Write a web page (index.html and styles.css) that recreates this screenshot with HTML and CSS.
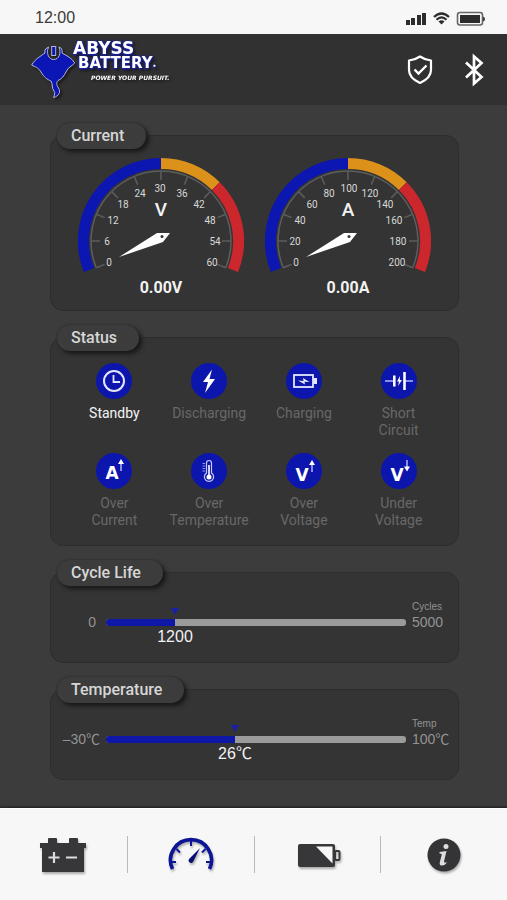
FILE: index.html
```html
<!DOCTYPE html>
<html lang="en">
<head>
<meta charset="utf-8">
<meta name="viewport" content="width=device-width, initial-scale=1">
<title>Abyss Battery</title>
<link rel="stylesheet" href="styles.css">
</head>
<body>
<div class="statusbar">
  <span class="clock">12:00</span>
  <svg class="system" width="80" height="16" viewBox="0 0 80 16" aria-hidden="true">
    <g fill="#2c2c2c">
      <rect x="0" y="10" width="4" height="5"/><rect x="5" y="8" width="4" height="7"/><rect x="11" y="5" width="4" height="10"/><rect x="16" y="3" width="4" height="12"/>
      <path d="M32.500 11.500 L35.500 14.500 L38.500 11.500 Q35.500 9 32.500 11.500Z"/>
      <rect x="54" y="5" width="20" height="8"/>
      <path d="M77 6.500 Q79 7 79 9 T77 11.500Z"/>
    </g>
    <path d="M28 7 Q35.500 0 43 7M30.500 9.800 Q35.500 5 40.500 9.800" fill="none" stroke="#2c2c2c" stroke-width="2.200"/>
    <rect x="51.500" y="2.500" width="25" height="12.500" rx="2.500" fill="none" stroke="#666" stroke-width="1.600"/>
  </svg>
</div>

<header class="header">
  <a class="brand" href="#">
    <svg class="manta" width="46" height="58" viewBox="0 0 46 58" aria-hidden="true">
      <path d="M18.500 6L15.500 8Q14.500 10 15 12C11 15 5 18 1.700 24C5 26 8 26 11 31C14 36 17 38.500 21 40C23 43 21.500 47 24 50C25.500 52 24.500 54 23.500 56.500C29 55 31 51 28.500 47C26 43.500 26.500 41 28 39.500C32 38 34 35 36.500 30C38.500 26 41 26 44.700 22C42 17 37 15 32 12Q32.500 9 31.500 7.500L29 6C31.500 12 29 18.500 23.700 18.500C18.500 18.500 16 12 18.500 6Z" fill="#0b16b4" stroke="#b4b6d8" stroke-width="1"/>
      <rect x="21.700" y="5.500" width="4" height="9" fill="#0b16b4" stroke="#b4b6d8"/>
    </svg>
    <span class="wordmark">
      <span class="word-top">ABYSS</span>
      <span class="word-bottom">BATTERY<span class="dot">•</span></span>
      <span class="tagline">POWER YOUR PURSUIT.</span>
    </span>
  </a>
  <div class="actions">
    <button class="icon-button" type="button" aria-label="Protection">
      <svg width="28" height="32" viewBox="0 0 28 32"><path d="M14 2.500Q19 6 25 6.500V16Q25 24 14 29Q3 24 3 16V6.500Q9 6 14 2.500Z" fill="none" stroke="#fff" stroke-width="2.200" stroke-linejoin="round"/><path d="M8.500 15.500L12.500 19.500L20.500 11.500" fill="none" stroke="#fff" stroke-width="2.400"/></svg>
    </button>
    <button class="icon-button" type="button" aria-label="Bluetooth">
      <svg width="28" height="36" viewBox="0 0 28 36"><path d="M6 10.500L21.500 25L14 31.500V4.500L21.500 11L6 25.500" fill="none" stroke="#fff" stroke-width="2.700"/></svg>
    </button>
  </div>
</header>

<main class="main">
  <section class="panel gauges">
    <h2 class="pill">Current</h2>
    <figure class="gauge">
      <svg width="166" height="114" viewBox="0 0 166 114" role="img" aria-label="Voltage gauge">
        <defs>
          <g id="dial">
            <g fill="none" stroke-width="11">
              <path d="M11 112A77.500 77.500 0 0 1 83 5.500" stroke="#0c16b0"/>
              <path d="M83 5.500A77.500 77.500 0 0 1 137.800 28.200" stroke="#dc911b"/>
              <path d="M137.800 28.200A77.500 77.500 0 0 1 155 112" stroke="#cb272d"/>
            </g>
            <g fill="none" stroke="#5d5d5d" stroke-width="1.500">
              <path d="M18.300 109.800A70 70 0 1 1 147.700 109.800"/>
              <path id="tick" d="M13 83H22"/>
              <use href="#tick" transform="rotate(-22.500 83 83)"/>
              <use href="#tick" transform="rotate(22.500 83 83)"/>
              <use href="#tick" transform="rotate(45 83 83)"/>
              <use href="#tick" transform="rotate(67.500 83 83)"/>
              <use href="#tick" transform="rotate(90 83 83)"/>
              <use href="#tick" transform="rotate(112.500 83 83)"/>
              <use href="#tick" transform="rotate(135 83 83)"/>
              <use href="#tick" transform="rotate(157.500 83 83)"/>
              <use href="#tick" transform="rotate(180 83 83)"/>
              <use href="#tick" transform="rotate(202.500 83 83)"/>
            </g>
            <path d="M41 99L79 75H92L85 84Z" fill="#fff"/>
            <circle cx="84" cy="78.500" r="1.500" fill="#333"/>
          </g>
        </defs>
        <use href="#dial"/>
        <g class="dial-numbers">
          <text x="31" y="108">0</text><text x="29" y="87">6</text><text x="35" y="66">12</text><text x="45" y="50">18</text><text x="62" y="39">24</text><text x="82" y="34">30</text><text x="104" y="39">36</text><text x="121" y="50">42</text><text x="132" y="66">48</text><text x="137" y="87">54</text><text x="134" y="108">60</text>
        </g>
        <text class="dial-unit" x="83" y="58">V</text>
      </svg>
      <figcaption class="reading">0.00V</figcaption>
    </figure>
    <figure class="gauge">
      <svg width="166" height="114" viewBox="0 0 166 114" role="img" aria-label="Current gauge">
        <use href="#dial"/>
        <g class="dial-numbers">
          <text x="31" y="108">0</text><text x="30" y="87">20</text><text x="35" y="66">40</text><text x="47" y="50">60</text><text x="64" y="39">80</text><text x="84" y="34">100</text><text x="105" y="39">120</text><text x="120" y="50">140</text><text x="129" y="66">160</text><text x="133" y="87">180</text><text x="132" y="108">200</text>
        </g>
        <text class="dial-unit" x="83" y="58">A</text>
      </svg>
      <figcaption class="reading">0.00A</figcaption>
    </figure>
  </section>

  <section class="panel status">
    <h2 class="pill">Status</h2>
    <ul class="states">
      <li class="state active">
        <svg class="badge" viewBox="0 0 36 36"><circle cx="18" cy="18" r="10" fill="none" stroke="#e4e6ff" stroke-width="2"/><path d="M17.500 12V19H24" fill="none" stroke="#e4e6ff" stroke-width="1.800"/></svg>
        Standby
      </li>
      <li class="state">
        <svg class="badge" viewBox="0 0 36 36"><path d="M21 6.500L12 19H17L14 30L24 16H18.500Z" fill="#fff"/></svg>
        Discharging
      </li>
      <li class="state">
        <svg class="badge" viewBox="0 0 36 36"><rect x="8" y="12" width="19" height="12" fill="none" stroke="#e4e6ff" stroke-width="1.800"/><rect x="27.500" y="15" width="3.500" height="6" fill="#e4e6ff"/><path d="M12 17.500L17.500 18L17 15L23.500 19L18.500 18.800L19 21.500Z" fill="#e4e6ff"/></svg>
        Charging
      </li>
      <li class="state">
        <svg class="badge" viewBox="0 0 36 36"><path d="M4 18H12M24 18H32" stroke="#aeb4ff" stroke-width="1.500"/><path d="M13.300 12.500V23.500M23.500 9V27" stroke="#fff" stroke-width="2.600"/><path d="M19 13L16 18.500H18L17 23L21 17H18.800Z" fill="#fff"/></svg>
        Short<br>Circuit
      </li>
      <li class="state">
        <svg class="badge" viewBox="0 0 36 36"><text class="badge-letter" x="16" y="26">A</text><path d="M25 18V9" stroke="#cfd3ff" stroke-width="1.300"/><path d="M25 6L28 11H22Z" fill="#fff"/></svg>
        Over<br>Current
      </li>
      <li class="state">
        <svg class="badge" viewBox="0 0 36 36"><path d="M15.500 20V10A2.500 2.500 0 0 1 20.500 10V20A4.600 4.600 0 1 1 15.500 20Z" fill="none" stroke="#c5caff" stroke-width="1.200"/><circle cx="18" cy="24" r="2.500" fill="#fff"/><path d="M18 12V24" stroke="#fff" stroke-width="1.600"/><path d="M11.500 10.500H14M11.500 13H14M11.500 15.500H14M11.500 18H14" stroke="#8f96ef"/></svg>
        Over<br>Temperature
      </li>
      <li class="state">
        <svg class="badge" viewBox="0 0 36 36"><text class="badge-letter" x="16" y="28">V</text><path d="M26 19V10" stroke="#cfd3ff" stroke-width="1.300"/><path d="M26 7L29 12H23Z" fill="#fff"/></svg>
        Over<br>Voltage
      </li>
      <li class="state">
        <svg class="badge" viewBox="0 0 36 36"><text class="badge-letter" x="16" y="28">V</text><path d="M26 7V16" stroke="#cfd3ff" stroke-width="1.300"/><path d="M26 18.500L29 13.500H23Z" fill="#fff"/></svg>
        Under<br>Voltage
      </li>
    </ul>
  </section>

  <section class="panel range">
    <h2 class="pill" id="cycle">Cycle Life</h2>
    <span class="unit">Cycles</span>
    <span class="min plain">0</span>
    <div class="track" style="--at: 23%">
      <progress max="100" value="23" aria-labelledby="cycle"></progress>
      <span class="marker"></span>
      <span class="value">1200</span>
    </div>
    <span class="max">5000</span>
  </section>

  <section class="panel range">
    <h2 class="pill" id="temperature">Temperature</h2>
    <span class="unit">Temp</span>
    <span class="min">–30℃</span>
    <div class="track" style="--at: 43%">
      <progress max="100" value="43" aria-labelledby="temperature"></progress>
      <span class="marker"></span>
      <span class="value">26℃</span>
    </div>
    <span class="max">100℃</span>
  </section>
</main>

<nav class="tabs">
  <a class="tab" href="#" aria-label="Battery">
    <svg width="48" height="40" viewBox="0 0 48 40"><path d="M10 3H17Q18 3 18 4V8H30V4Q30 3 31 3H38Q39 3 39 4V8H47V13H45V37H3V13H1V8H9V4Q9 3 10 3Z" fill="#37373a"/><path d="M15 17V28M9.500 22.500H20.500M27 22.500H38" stroke="#ddd" stroke-width="2.200"/></svg>
  </a>
  <a class="tab" href="#" aria-label="Dashboard" aria-current="page">
    <svg width="48" height="40" viewBox="0 0 48 40"><path d="M6.500 34A20.500 20.500 0 1 1 43.500 34" fill="none" stroke="#0b1596" stroke-width="3.600"/><path d="M5 27H10M10.500 14L14 17.500M25 5V11M39.500 14L36 17.500M45 27H40" stroke="#0b1596" stroke-width="2"/><path d="M34 13L27.500 26A2.500 2.500 0 1 1 23.500 23.500Z" fill="#0a1070"/></svg>
  </a>
  <a class="tab" href="#" aria-label="Charge">
    <svg width="48" height="40" viewBox="0 0 48 40"><rect x="5" y="9" width="37" height="23" rx="2" fill="#37373a"/><path d="M23 11.500H39.500V28.500Z" fill="#f7f7f7"/><rect x="42" y="16" width="4.500" height="9" rx="1" fill="none" stroke="#37373a" stroke-width="2"/></svg>
  </a>
  <a class="tab" href="#" aria-label="Information">
    <svg width="48" height="40" viewBox="0 0 48 40"><circle cx="24" cy="20" r="16.500" fill="#343437"/><circle cx="26" cy="11.500" r="2.500" fill="#ddd"/><path d="M19.500 17L26.500 16L24 26.500Q24 28.500 27 27Q25 31 21 30.500Q19 29.500 20 26.500L21.800 19.500Q21.500 18.500 19.500 18.500Z" fill="#ddd"/></svg>
  </a>
</nav>
</body>
</html>
```
FILE: styles.css
```css
* {
  box-sizing: border-box;
}

body {
  display: flex;
  flex-direction: column;
  min-height: 100vh;
  margin: 0;
  background: #3c3c3c;
  color: #f2f2f2;
  font-family: Roboto, "Liberation Sans", sans-serif;
}

.statusbar {
  display: flex;
  align-items: center;
  justify-content: space-between;
  height: 34px;
  padding: 2px 21px 0 35px;
  background: #f7f7f7;
  color: #3a3a3a;
}

.clock {
  font: 16px/20px "Liberation Sans", sans-serif;
}

.header {
  display: flex;
  align-items: center;
  justify-content: space-between;
  height: 71px;
  padding: 0 19px 0 30px;
  background: #313131;
}

.brand {
  display: flex;
  gap: 2px;
  color: #fff;
  text-decoration: none;
  filter: drop-shadow(2px 2px 1px #1c1c1c);
}

.manta {
  flex: none;
}

.wordmark {
  display: flex;
  flex-direction: column;
  font-family: "DejaVu Sans", sans-serif;
  font-weight: 700;
  text-shadow: 0 0 3px #1822c8, 0 1px 2px #1822c8;
}

.word-top {
  margin-left: -5px;
  font-size: 17px;
  line-height: 14px;
}

.word-bottom {
  font-size: 15px;
  line-height: 17px;
}

.dot {
  font-size: 6px;
}

.tagline {
  margin-left: 13px;
  font-size: 6px;
  font-style: italic;
  line-height: 7px;
  text-shadow: none;
}

.actions {
  display: flex;
  align-items: center;
  gap: 26px;
}

.icon-button {
  display: flex;
  padding: 0;
  border: 0;
  background: none;
}

.main {
  display: flex;
  flex: 1;
  flex-direction: column;
  gap: 26px;
  padding: 30px 48px 27px 50px;
}

.panel {
  position: relative;
  border: 1px solid #2d2d2d;
  border-radius: 13px;
  background: #343434;
}

.pill {
  position: absolute;
  top: -13px;
  left: 6px;
  margin: 0;
  padding: 0 22px 0 14px;
  border-radius: 13px;
  background: #3c3c3c;
  box-shadow: 3px 3px 4px #181818, 0 0 2px #282828;
  color: #d6d6d6;
  font-size: 16px;
  font-weight: 500;
  line-height: 26px;
  white-space: nowrap;
}

.gauges {
  display: flex;
  justify-content: center;
  gap: 21px;
  padding: 22px 0 12px;
}

.gauge {
  display: flex;
  flex-direction: column;
  align-items: center;
  gap: 6px;
  margin: 0;
}

.dial-numbers {
  fill: #d8d8d8;
  font-size: 10px;
  text-anchor: middle;
}

.dial-unit {
  fill: #f2f2f2;
  font-size: 19px;
  font-weight: 500;
  text-anchor: middle;
}

.reading {
  font-size: 16px;
  font-weight: 700;
  line-height: 20px;
}

.status {
  padding: 25px 12px 16px 16px;
}

.states {
  display: grid;
  grid-template-columns: repeat(4, 1fr);
  row-gap: 14px;
  margin: 0;
  padding: 0;
  list-style: none;
}

.state {
  display: flex;
  flex-direction: column;
  align-items: center;
  color: #686868;
  font-size: 14px;
  line-height: 17px;
  text-align: center;
}

.active {
  color: #f4f4f4;
}

.badge {
  width: 36px;
  height: 36px;
  margin-bottom: 6px;
  border-radius: 50%;
  background: #0c16ac;
}

.badge-letter {
  fill: #fff;
  font: 700 17px "DejaVu Sans", sans-serif;
  text-anchor: middle;
}

.range {
  display: grid;
  grid-template-columns: 49px 1fr 46px;
  grid-template-rows: 14px 16px;
  column-gap: 6px;
  align-items: center;
  padding: 27px 0 32px;
  color: #939393;
  font: 14px/16px "Liberation Sans", "Noto Sans CJK SC", sans-serif;
}

.range .pill {
  font-family: Roboto, sans-serif;
}

.unit {
  grid-column: 3;
  font-size: 10px;
  line-height: 14px;
}

.min {
  grid-column: 1;
  text-align: right;
}

.plain {
  padding-right: 4px;
}

.track {
  position: relative;
  display: flex;
}

progress {
  width: 100%;
  height: 7px;
  border: 0;
  border-radius: 3px;
  overflow: hidden;
  appearance: none;
}

progress::-webkit-progress-bar {
  background: #9b9b9b;
}

progress::-webkit-progress-value {
  background: #0e17a6;
}

.marker {
  position: absolute;
  bottom: 11px;
  left: var(--at);
  border: 4px solid transparent;
  border-top: 7px solid #1a20a8;
  border-bottom: 0;
  transform: translateX(-50%);
}

.value {
  position: absolute;
  top: 8px;
  left: var(--at);
  color: #f2f2f2;
  font-size: 16px;
  line-height: 20px;
  white-space: nowrap;
  transform: translateX(-50%);
}

.tabs {
  display: flex;
  height: 92px;
  border-top: 1px solid #fff;
  background: #f7f7f7;
  box-shadow: 0 -1px 2px #1c1c1c;
}

.tab {
  position: relative;
  display: flex;
  flex: 1;
  align-items: center;
  justify-content: center;
}

.tab svg {
  filter: drop-shadow(1px 2px 1px #aaa);
}

.tab + .tab::before {
  position: absolute;
  left: 0;
  width: 1px;
  height: 37px;
  background: #b9b9be;
  content: "";
}
```
